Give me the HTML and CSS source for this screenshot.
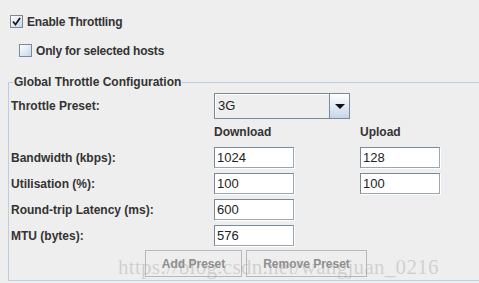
FILE: index.html
```html
<!DOCTYPE html>
<html lang="en">
<head>
    <meta charset="UTF-8">
    <title>Throttling</title>
    <link rel="stylesheet" href="styles.css">
</head>
<body>
    <div class="options">
        <label class="check-row">
            <span class="check checked">
                <svg width="9" height="9" viewBox="0 0 9 9"><path d="M1 4.5 L3.5 7.5 L8 1" fill="none" stroke="#1a1a1a" stroke-width="1.8"/></svg>
            </span>
            Enable Throttling
        </label>
        <label class="check-row sub">
            <span class="check"></span>
            Only for selected hosts
        </label>
    </div>

    <fieldset class="config">
        <legend>Global Throttle Configuration</legend>
        <div class="grid">
            <div class="label">Throttle Preset:</div>
            <div class="combo">
                <span class="combo-value">3G</span>
                <span class="combo-arrow"></span>
            </div>
            <div></div>

            <div class="label"></div>
            <div class="head">Download</div>
            <div class="head">Upload</div>

            <div class="label">Bandwidth (kbps):</div>
            <div class="field">1024</div>
            <div class="field">128</div>

            <div class="label">Utilisation (%):</div>
            <div class="field">100</div>
            <div class="field">100</div>

            <div class="label">Round-trip Latency (ms):</div>
            <div class="field">600</div>
            <div></div>

            <div class="label">MTU (bytes):</div>
            <div class="field">576</div>
            <div></div>
        </div>
        <div class="buttons">
            <button class="btn add" disabled>Add Preset</button>
            <button class="btn remove" disabled>Remove Preset</button>
        </div>
        <div class="watermark">https://blog.csdn.net/wangjuan_0216</div>
    </fieldset>
</body>
</html>
```

FILE: styles.css
```css
body {
    margin: 0;
    background: #eeeeee;
    font-family: "Liberation Sans", Arial, sans-serif;
    font-size: 12px;
    font-weight: bold;
    color: #333333;
    width: 479px;
    height: 283px;
    overflow: hidden;
}
.options {
    padding-top: 15px;
    height: 58px;
    box-sizing: border-box;
}
.check-row {
    display: flex;
    align-items: center;
    gap: 4px;
    height: 13px;
    padding-left: 10px;
    letter-spacing: -0.2px;
}
.check-row.sub {
    margin-top: 16px;
    padding-left: 19px;
}
.check {
    width: 13px;
    height: 13px;
    box-sizing: border-box;
    border: 1px solid #7a8a99;
    background: linear-gradient(135deg, #ffffff 0%, #dbe6f1 60%, #c6d7e8 100%);
    display: flex;
    align-items: center;
    justify-content: center;
}
.config {
    position: relative;
    margin: 17px 0 0 8px;
    padding: 0 0 3px 0;
    width: 520px;
    border: 1px solid #b8cfe5;
    min-width: 0;
}
.config legend {
    margin-left: 4px;
    padding: 0 1px;
    line-height: 14px;
}
.grid {
    display: grid;
    grid-template-columns: 203px 146px 80px;
    grid-template-rows: 26px 28px 26px 26px 26px 21px;
    padding: 4px 0 0 2px;
    align-items: start;
}
.grid > .label {
    line-height: 14px;
    margin-top: 4px;
}
.grid > .label:first-child {
    margin-top: 6px;
}
.grid > .head {
    margin-top: 6px;
    line-height: 14px;
}
.combo {
    display: flex;
    height: 26px;
    width: 136px;
    box-sizing: border-box;
    border: 1px solid #7a8a99;
    background: #eeeeee;
}
.combo-value {
    flex: 1;
    padding-left: 3px;
    font-weight: normal;
    font-size: 13px;
    color: #222;
    line-height: 24px;
    border-right: 1px solid #7a8a99;
    box-shadow: inset 1px 1px 0 #ffffff;
}
.combo-arrow {
    width: 19px;
    background: linear-gradient(#ffffff, #dde7f2 60%, #c4d6e8);
    display: flex;
    align-items: center;
    justify-content: center;
}
.combo-arrow::after {
    content: "";
    border-left: 5px solid transparent;
    border-right: 5px solid transparent;
    border-top: 5px solid #111;
}
.field {
    width: 80px;
    height: 21px;
    box-sizing: border-box;
    border: 1px solid #7a8a99;
    border-right-color: #9aa6b2;
    border-bottom-color: #9aa6b2;
    box-shadow: 1px 1px 0 #ffffff;
    background: #ffffff;
    padding-left: 2px;
    font-weight: normal;
    font-size: 13px;
    line-height: 19px;
    color: #222;
}
.buttons {
    display: flex;
    gap: 4px;
    padding-left: 136px;
    margin-top: 4px;
}
.btn {
    height: 27px;
    box-sizing: border-box;
    border: 1px solid #b8b8b8;
    background: transparent;
    font-family: "Liberation Sans", Arial, sans-serif;
    font-weight: bold;
    font-size: 12px;
    color: #8e8e8e;
    padding: 0;
}
.btn.add {
    width: 97px;
}
.btn.remove {
    width: 121px;
}
.watermark {
    position: absolute;
    left: 109px;
    top: 166px;
    font-family: "Liberation Serif", "Times New Roman", serif;
    font-weight: normal;
    font-size: 21px;
    letter-spacing: 0.3px;
    color: rgba(150, 150, 150, 0.35);
    pointer-events: none;
    white-space: nowrap;
}
```
